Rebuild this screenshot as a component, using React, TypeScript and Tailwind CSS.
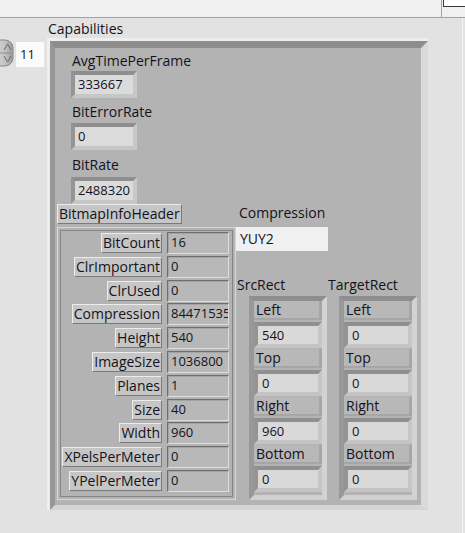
import React from "react";

type P = { children?: React.ReactNode };

function NumBox({ value, w = "w-[66px]" }: { value: string; w?: string }) {
  return (
    <div
      className={`${w} h-[27px] border-[4px] border-t-[#8e8e8e] border-l-[#959595] border-r-[#c8c8c8] border-b-[#c6c6c6] bg-[#dbdbdb] pl-[3px] text-[13px] leading-[19px] overflow-hidden whitespace-nowrap`}
    >
      {value}
    </div>
  );
}

function LabelBtn({ children }: P) {
  return (
    <div className="h-[20px] px-[1px] text-[14px] leading-[18px] bg-[#c6c6c6] border border-t-[#ececec] border-l-[#ececec] border-r-[#7a7a7a] border-b-[#7a7a7a] whitespace-nowrap">
      {children}
    </div>
  );
}

function ValBox({ value }: { value: string }) {
  return (
    <div className="w-[62px] h-[22px] border border-t-[#6e6e6e] border-l-[#6e6e6e] border-r-[#dedede] border-b-[#dedede] bg-[#b8b8b8] shadow-[inset_1px_1px_0_#a4a4a4] pl-[3px] text-[13px] leading-[19px] overflow-hidden whitespace-nowrap">
      {value}
    </div>
  );
}

function Row({ label, value }: { label: string; value: string }) {
  return (
    <div className="flex justify-end items-center gap-[5px] h-[22px]">
      <LabelBtn>{label}</LabelBtn>
      <ValBox value={value} />
    </div>
  );
}

function RectItem({ label, value, first }: { label: string; value: string; first?: boolean }) {
  return (
    <div className={first ? "" : "mt-[1px]"}>
      <div className="h-[19px] bg-[#b8b8b8] border-r-[3px] border-b-[2px] border-[#a6a6a6] pl-[2px] text-[14px] leading-[17px]">
        {label}
      </div>
      <div className="mt-[2px] h-[26px] border-[4px] border-t-[#8f8f8f] border-l-[#949494] border-r-[#c6c6c6] border-b-[#c4c4c4] bg-[#d9d9d9] pl-[4px] text-[13px] leading-[18px]">
        {value}
      </div>
    </div>
  );
}

function RectCluster({ vals }: { vals: string[] }) {
  const names = ["Left", "Top", "Right", "Bottom"];
  return (
    <div className="w-[78px] h-[204px] border-[5px] border-t-[#8e8e8e] border-l-[#989898] border-r-[#d3d3d3] border-b-[#d0d0d0] bg-[#b3b3b3] flex flex-col">
      {names.map((n, i) => (
        <RectItem key={n} label={n} value={vals[i]} first={i === 0} />
      ))}
    </div>
  );
}

function Spinner() {
  return (
    <svg width="15" height="28" viewBox="0 0 15 28">
      <defs>
        <linearGradient id="sg" x1="0" y1="0" x2="1" y2="0">
          <stop offset="0" stopColor="#d8d8d8" />
          <stop offset="0.6" stopColor="#c4c4c4" />
          <stop offset="1" stopColor="#9a9a9a" />
        </linearGradient>
      </defs>
      <rect x="-8" y="1" width="21" height="26" rx="8" fill="url(#sg)" stroke="#8a8a8a" />
      <line x1="-2" y1="14" x2="12" y2="14" stroke="#8f8f8f" />
      <path d="M4 11 L7.5 5 L11 11" fill="none" stroke="#6a6a6a" strokeWidth="1" />
      <path d="M4 17 L7.5 23 L11 17" fill="none" stroke="#6a6a6a" strokeWidth="1" />
    </svg>
  );
}

export default function App() {
  const bih: [string, string][] = [
    ["BitCount", "16"],
    ["ClrImportant", "0"],
    ["ClrUsed", "0"],
    ["Compression", "844715353"],
    ["Height", "540"],
    ["ImageSize", "1036800"],
    ["Planes", "1"],
    ["Size", "40"],
    ["Width", "960"],
    ["XPelsPerMeter", "0"],
    ["YPelPerMeter", "0"],
  ];
  return (
    <div className="w-[465px] h-[533px] bg-[#e2e2e2] overflow-hidden relative font-['Open_Sans','Noto_Sans',sans-serif] text-[#14121c]">
      {/* top toolbar strip */}
      <div className="h-[18px] bg-[#f0f0f0] border-b border-[#a3a3a3] flex justify-end">
        <div className="w-[24px] h-full border-l border-[#a3a3a3] pl-[1px]">
          <div className="h-[7px] bg-white border-l border-b border-[#3a3a3a]" />
        </div>
      </div>
      <div className="absolute right-[2px] top-[18px] bottom-0 w-px bg-[#f5f5f5]" />

      <div className="ml-[48px] mt-[2px] h-[18px] text-[14px] leading-[18px]">Capabilities</div>

      <div className="flex">
        {/* array index */}
        <div className="w-[47px] flex items-start pt-[1px]">
          <Spinner />
          <div className="ml-[1px] mt-[3px] w-[28px] h-[25px] bg-[#fbfbfb] pl-[4px] text-[13px] leading-[24px]">
            11
          </div>
        </div>

        {/* Capabilities cluster */}
        <div className="w-[381px] h-[472px] border-t-[3px] border-l-[3px] border-[#eeeeee] flex">
          <div className="flex-1 border-t-[7px] border-l-[5px] border-r-[7px] border-b-[5px] border-t-[#8d8d8d] border-l-[#979797] border-r-[#dadada] border-b-[#d6d6d6] bg-[#b3b3b3] flex">
            {/* left column */}
            <div className="w-[181px] flex flex-col">
              <div className="mt-[4px] ml-[17px] h-[18px] text-[14px] leading-[18px]">AvgTimePerFrame</div>
              <div className="mt-[1px] ml-[16px]">
                <NumBox value="333667" />
              </div>
              <div className="mt-[5px] ml-[17px] h-[18px] text-[14px] leading-[18px]">BitErrorRate</div>
              <div className="mt-[2px] ml-[16px]">
                <NumBox value="0" />
              </div>
              <div className="mt-[6px] ml-[17px] h-[18px] text-[14px] leading-[18px]">BitRate</div>
              <div className="mt-[3px] ml-[16px]">
                <NumBox value="2488320" />
              </div>
              <div className="ml-[2px] self-start">
                <LabelBtn>BitmapInfoHeader</LabelBtn>
              </div>
              <div className="mt-[3px] ml-[2px] w-[179px] h-[273px] border border-[#d8d8d8] p-[2px]">
                <div className="h-full border border-[#858585] pt-[1px] pr-[3px] flex flex-col gap-[1.8px]">
                  {bih.map(([l, v]) => (
                    <Row key={l} label={l} value={v} />
                  ))}
                </div>
              </div>
            </div>

            {/* right column */}
            <div className="flex-1 flex flex-col">
              <div className="mt-[156px] ml-[3px] h-[18px] text-[14px] leading-[18px]">Compression</div>
              <div className="mt-[5px] w-[92px] h-[24px] bg-[#f0f0f0] pl-[4px] text-[14px] leading-[23px]">YUY2</div>
              <div className="mt-[25px] flex h-[18px] text-[14px] leading-[18px]">
                <div className="ml-[1px] w-[91px]">SrcRect</div>
                <div>TargetRect</div>
              </div>
              <div className="mt-[2px] flex">
                <div className="ml-[13px]">
                  <RectCluster vals={["540", "0", "960", "0"]} />
                </div>
                <div className="ml-[12px]">
                  <RectCluster vals={["0", "0", "0", "0"]} />
                </div>
              </div>
            </div>
          </div>
        </div>
      </div>
    </div>
  );
}
